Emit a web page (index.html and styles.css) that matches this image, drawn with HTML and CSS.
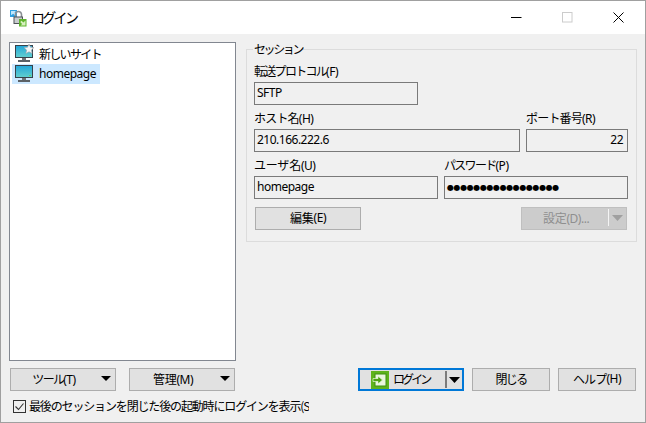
FILE: index.html
```html
<!DOCTYPE html>
<html lang="ja">
<head>
<meta charset="utf-8">
<title>ログイン</title>
<link rel="stylesheet" href="styles.css">
</head>
<body>
<div class="window">
  <header class="titlebar">
    <svg class="app-icon" width="18" height="18" viewBox="0 0 18 18">
      <rect x="1" y="1" width="7" height="7" fill="#2f9fe0"/>
      <path d="M2 2h5l-1.500 1.500 1.800 1.800-1.300 1.300-1.800-1.800L2 6.300z" fill="#bfe6fb"/>
      <path d="M6.500 8V5.500a3 3 0 0 1 6 0V8" fill="none" stroke="#8a8f94" stroke-width="1.600"/>
      <rect x="4.500" y="7.500" width="9.500" height="7.500" fill="#4e5257"/>
      <rect x="5.500" y="8.500" width="7.500" height="5.500" fill="#c9cccf"/>
      <rect x="10" y="10" width="7.500" height="7.500" fill="#5fb52e"/>
      <path d="M16.500 16.500h-5l1.600-1.600-1.900-1.900 1.300-1.300 1.900 1.900 2.100-2.100z" fill="#d8f0c0"/>
    </svg>
    <span class="title ja">ログイン</span>
    <div class="win-controls">
      <span class="win-btn"><svg width="11" height="11" viewBox="0 0 11 11"><path d="M0 5.500h10.500" stroke="#000"/></svg></span>
      <span class="win-btn"><svg width="11" height="11" viewBox="0 0 11 11"><rect x=".5" y=".5" width="9.500" height="9.500" fill="none" stroke="#ccc"/></svg></span>
      <span class="win-btn"><svg width="11" height="11" viewBox="0 0 11 11"><path d="M.5.500l10 10M10.500.500l-10 10" stroke="#000"/></svg></span>
    </div>
  </header>

  <main class="content">
    <ul class="site-tree">
      <li class="site-row">
        <svg class="site-icon" width="19" height="19" viewBox="0 0 19 19">
          <defs><linearGradient id="s1" x1="0" y1="0" x2="0" y2="1"><stop offset="0" stop-color="#23a6d9"/><stop offset="1" stop-color="#62d0cf"/></linearGradient></defs>
          <rect x="0.500" y="1.500" width="17" height="12" fill="url(#s1)" stroke="#37424b"/>
          <rect x="7" y="14" width="4" height="2" fill="#6f7478"/>
          <rect x="3" y="16" width="12" height="2" fill="#5b6166"/>
          <path d="M14 0l1.500 3.200 3.500.4-2.600 2.400.7 3.500L14 7.800l-3.100 1.700.7-3.500L9 3.600l3.500-.4z" fill="#f4f5f6" stroke="#9aa0a6" stroke-width=".6"/>
        </svg>
        <span class="ja ja-n">新しいサイト</span>
      </li>
      <li class="site-row selected">
        <svg class="site-icon" width="19" height="19" viewBox="0 0 19 19">
          <defs><linearGradient id="s2" x1="0" y1="0" x2="0" y2="1"><stop offset="0" stop-color="#23a6d9"/><stop offset="1" stop-color="#62d0cf"/></linearGradient></defs>
          <rect x="0.500" y="1.500" width="17" height="12" fill="url(#s2)" stroke="#37424b"/>
          <rect x="14" y="11" width="2" height="1" fill="#5fd35f"/>
          <rect x="7" y="14" width="4" height="2" fill="#6f7478"/>
          <rect x="3" y="16" width="12" height="2" fill="#5b6166"/>
        </svg>
        <span>homepage</span>
      </li>
    </ul>

    <fieldset class="session">
      <legend class="ja ja-xn">セッション</legend>
      <div class="row row-protocol">
        <label class="field"><span class="label"><span class="ja ja-n">転送プロトコル</span>(F)</span><span class="input">SFTP</span></label>
      </div>
      <div class="row row-host">
        <label class="field"><span class="label"><span class="ja">ホスト名</span>(H)</span><span class="input">210.166.222.6</span></label>
        <label class="field"><span class="label"><span class="ja">ポート番号</span>(R)</span><span class="input right">22</span></label>
      </div>
      <div class="row row-user">
        <label class="field"><span class="label"><span class="ja ja-w">ユーザ名</span>(U)</span><span class="input">homepage</span></label>
        <label class="field"><span class="label"><span class="ja ja-n">パスワード</span>(P)</span><span class="input dots">●●●●●●●●●●●●●●●●●</span></label>
      </div>
      <div class="row-actions">
        <button class="btn edit" type="button"><span class="ja ja-w">編集</span>(E)</button>
        <button class="btn settings" type="button" disabled>
          <span class="settings-label"><span class="ja ja-w">設定</span>(D)...</span>
          <span class="split-line"></span>
          <svg class="caret" width="11" height="6" viewBox="0 0 11 6"><path d="M0 0h11L5.500 6z" fill="#a0a0a0"/></svg>
        </button>
      </div>
    </fieldset>

    <div class="tools">
      <button class="btn tool" type="button"><span class="tool-label"><span class="ja ja-n">ツール</span>(T)</span><svg class="caret" width="10" height="5" viewBox="0 0 10 5"><path d="M0 0h10L5 5z"/></svg></button>
      <button class="btn tool" type="button"><span class="tool-label"><span class="ja ja-w">管理</span>(M)</span><svg class="caret" width="10" height="5" viewBox="0 0 10 5"><path d="M0 0h10L5 5z"/></svg></button>
    </div>

    <div class="actions">
      <button class="btn login" type="button">
        <svg class="login-icon" width="18" height="18" viewBox="0 0 18 18">
          <rect width="18" height="18" fill="#5fb31c"/>
          <rect x="4" y="3" width="11" height="12" fill="#eaf6dd" stroke="#3f8f10"/>
          <path d="M2 7.500h5V5l4.500 4L7 13v-2.500H2z" fill="#4fa512" stroke="#eaf6dd" stroke-width=".7"/>
        </svg>
        <span class="ja ja-xn login-text">ログイン</span>
        <span class="login-split"></span>
        <svg class="caret" width="11" height="6" viewBox="0 0 11 6"><path d="M0 0h11L5.500 6z"/></svg>
      </button>
      <button class="btn small" type="button"><span class="ja ja-n">閉じる</span></button>
      <button class="btn small" type="button"><span class="ja">ヘルプ</span>(H)</button>
    </div>

    <label class="startup">
      <svg class="check" width="13" height="13" viewBox="0 0 13 13"><rect x=".5" y=".5" width="12" height="12" fill="#f0f0f0" stroke="#333"/><path d="M2.500 6.500l3 3 5-6" fill="none" stroke="#333" stroke-width="1.100"/></svg>
      <span class="startup-text ja">最後のセッションを閉じた後の起動時にログインを表示(S</span>
    </label>
  </main>
</div>
</body>
</html>
```
FILE: styles.css
```css
* { box-sizing: border-box; }
html, body { margin: 0; padding: 0; }
body {
  font-family: "Noto Sans", "Noto Sans CJK JP", sans-serif;
  font-size: 12px;
  letter-spacing: -0.5px;
  color: #000;
  background: #f0f0f0;
}
.ja {
  font-family: "Noto Sans CJK JP", sans-serif;
  font-size: 12px;
  letter-spacing: -0.8px;
}
.ja-n { letter-spacing: -1.7px; }
.ja-xn { letter-spacing: -2.400px; }
.ja-w { letter-spacing: -0.2px; }
.window {
  width: 646px;
  height: 423px;
  border: 1px solid #a0a0a0;
  display: flex;
  flex-direction: column;
  overflow: hidden;
}
.titlebar {
  height: 33px;
  flex: none;
  background: #fff;
  display: flex;
  align-items: center;
  padding-left: 8px;
}
.app-icon { flex: none; margin-right: 4px; }
.title { font-size: 14px; letter-spacing: -2.700px; padding-bottom: 2px; }
.win-controls { margin-left: auto; display: flex; padding-right: 1px; }
.win-btn {
  width: 51px;
  height: 33px;
  display: flex;
  align-items: center;
  justify-content: center;
}
.content {
  flex: 1;
  display: grid;
  grid-template-columns: 227px 391px;
  grid-template-rows: 319px 23px auto;
  column-gap: 10px;
  row-gap: 7px;
  padding: 8px 0 0 8px;
}
.site-tree {
  list-style: none;
  margin: 0;
  padding: 1px 0 0 2px;
  background: #fff;
  border: 1px solid #828790;
}
.site-row {
  width: 88px;
  height: 20px;
  display: flex;
  align-items: center;
  padding: 0 0 2px 3px;
  white-space: nowrap;
}
.site-row.selected { background: #cce8ff; }
.site-icon { flex: none; margin-right: 5px; }
.session {
  margin: 0;
  padding: 8px 8px 11px 7px;
  border: 1px solid #dcdcdc;
  min-width: 0;
  align-self: start;
}
.session legend { padding: 0 1px; margin-left: -1px; line-height: 14px; }
.row { display: grid; column-gap: 6px; margin-bottom: 6px; }
.row-protocol { grid-template-columns: 164px; }
.row-host { grid-template-columns: 266px 102px; }
.row-user { grid-template-columns: 184px 184px; margin-bottom: 8px; }
.field { display: flex; flex-direction: column; }
.label { height: 18px; line-height: 14px; white-space: nowrap; }
.input {
  height: 23px;
  border: 1px solid #7a7a7a;
  line-height: 20px;
  padding: 0 2px;
  white-space: nowrap;
  overflow: hidden;
}
.input.right { text-align: right; padding-right: 4px; }
.input.dots {
  font-family: "DejaVu Sans", sans-serif;
  font-size: 8px;
  letter-spacing: -0.400px;
  line-height: 21px;
  padding-left: 2px;
}
.btn {
  font: inherit;
  letter-spacing: inherit;
  color: #000;
  height: 23px;
  padding: 0 0 2px;
  background: #e1e1e1;
  border: 1px solid #adadad;
  display: flex;
  align-items: center;
  justify-content: center;
}
.row-actions { display: flex; justify-content: space-between; padding: 0 1px; }
.edit { width: 106px; }
.settings { width: 106px; background: #ccc; border-color: #bfbfbf; color: #8f8f8f; }
.settings-label { flex: 1; text-align: center; padding-left: 2px; }
.split-line { width: 1px; height: 17px; background: #f4f4f4; margin-right: 3px; }
.settings .caret { margin-right: 3px; }
.tools { display: flex; gap: 13px; padding-left: 1px; }
.tool { width: 106px; padding-right: 4px; }
.tool-label { flex: 1; text-align: center; padding-right: 4px; }
.actions {
  display: flex;
  justify-content: flex-end;
  gap: 8px;
  padding-right: 1px;
}
.small { width: 78px; }
.login {
  width: 106px;
  border: 2px solid #0078d7;
  justify-content: flex-start;
  padding: 0 0 0 11px;
}
.login-icon { flex: none; }
.login-text { margin-left: 4px; letter-spacing: -2.900px; padding-bottom: 2px; }
.login-split { width: 2px; height: 17px; background: #7b7b7b; margin-left: auto; margin-right: 2px; }
.login .caret { margin-right: 2px; }
.startup {
  grid-column: 1 / 3;
  display: flex;
  align-items: center;
  width: 297px;
  margin-left: 4px;
  height: 16px;
  overflow: hidden;
  white-space: nowrap;
}
.check { flex: none; margin-right: 3px; }
.startup-text { overflow: hidden; letter-spacing: -1.150px; padding-bottom: 2px; }
```
